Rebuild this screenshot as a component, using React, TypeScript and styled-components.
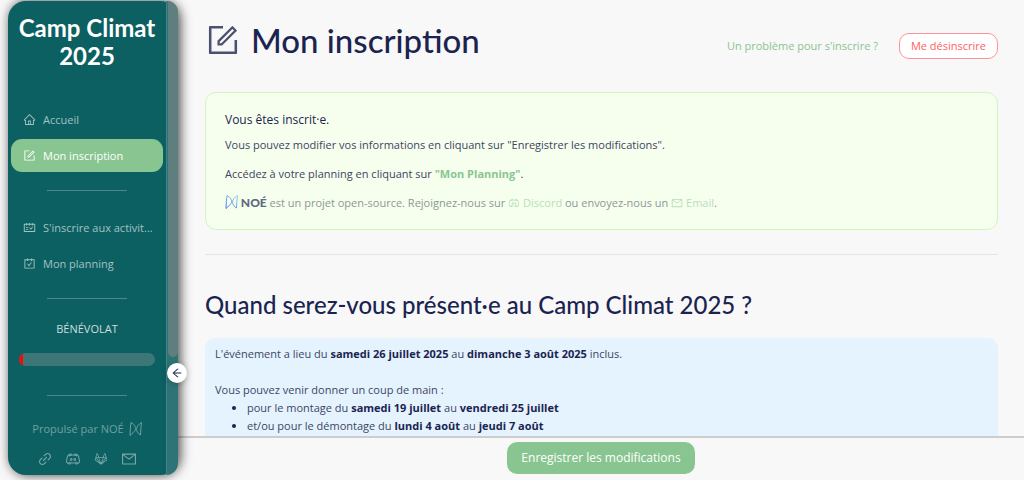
import React from "react";
import styled, { createGlobalStyle } from "styled-components";
import {
  AiOutlineArrowLeft,
  AiOutlineCarryOut,
  AiOutlineDiscord,
  AiOutlineForm,
  AiOutlineGitlab,
  AiOutlineHome,
  AiOutlineLink,
  AiOutlineMail,
  AiOutlineSchedule,
} from "react-icons/ai";

const colors = {
  teal: "#0c6062",
  green: "#89c590",
  navy: "#1b2450",
  page: "#f8f8f8",
  text: "#3c4564",
};

const headingFont = '"Lato", "Open Sans", sans-serif';

const GlobalStyle = createGlobalStyle`
  *, *::before, *::after { box-sizing: border-box; }
  body {
    margin: 0;
    background: ${colors.page};
    color: ${colors.text};
    font: 11px/18px "Open Sans", "Noto Sans", sans-serif;
  }
  h1, h2, p, ul { margin: 0; }
  a { text-decoration: none; color: inherit; }
  button { font: inherit; cursor: pointer; }
`;

const Shell = styled.div`
  display: flex;
  height: 100vh;
`;

const Sidebar = styled.aside`
  position: relative;
  z-index: 1;
  display: flex;
  flex: none;
  width: 170px;
  margin: 1px 0 5px 8px;
  border-radius: 18px;
  background: ${colors.teal};
  box-shadow: 2px 0 12px rgba(0, 0, 0, 0.75);
`;

const SidebarBody = styled.div`
  flex: 1;
  min-width: 0;
  display: flex;
  flex-direction: column;
  align-items: center;
`;

const SidebarTitle = styled.div`
  padding: 13px 0 33px;
  color: #fff;
  font: 700 24px/28px ${headingFont};
  text-align: center;
`;

const Menu = styled.nav`
  align-self: stretch;
  display: flex;
  flex-direction: column;
  gap: 3px;
  padding: 0 3px;
`;

const MenuItem = styled.a<{ $active?: boolean }>`
  display: flex;
  align-items: center;
  gap: 7px;
  height: 33px;
  padding: 0 6px 0 12px;
  border-radius: 11px;
  background: ${(p) => (p.$active ? colors.green : "transparent")};
  color: ${(p) => (p.$active ? "#fff" : "#a3c2c2")};
  white-space: nowrap;

  svg { flex: none; width: 13px; height: 13px; }
`;

const MenuRule = styled.hr`
  flex: none;
  width: 80px;
  height: 1px;
  margin: 18px 0 20px;
  border: 0;
  background: #4b898a;
`;

const GaugeLabel = styled.div`
  color: #ccdddd;
  line-height: 20px;
`;

const Gauge = styled.div`
  align-self: stretch;
  height: 13px;
  margin: 14px 11px 11px;
  border-radius: 7px;
  overflow: hidden;
  background: #3d7677;
`;

const GaugeFill = styled.div`
  height: 100%;
  background: #f50a0a;
`;

const Powered = styled.a`
  display: flex;
  align-items: center;
  gap: 5px;
  margin-top: 4px;
  color: #6da0a1;
`;

const SocialLinks = styled.div`
  display: flex;
  gap: 12px;
  margin-top: 13px;
  color: #78a7a8;

  a { display: flex; }
  svg { width: 16px; height: 16px; }
`;

const ScrollTrack = styled.div`
  flex: 0 0 12px;
  border-left: 1px solid #418485;
  border-radius: 0 18px 18px 0;
  overflow: hidden;
  background: #2e7477;
`;

const ScrollThumb = styled.div`
  height: 75%;
  margin-left: 1px;
  border-radius: 0 0 5px 5px;
  background: #5f7f7e;
`;

const CollapseButton = styled.button`
  position: absolute;
  right: -9px;
  bottom: 92px;
  display: flex;
  align-items: center;
  justify-content: center;
  width: 20px;
  height: 20px;
  padding: 0;
  border: 0;
  border-radius: 50%;
  background: #fff;
  color: ${colors.navy};
  box-shadow: 0 1px 6px rgba(0, 0, 0, 0.25);
`;

const Main = styled.main`
  flex: 1;
  min-width: 0;
  display: flex;
  flex-direction: column;
`;

const Content = styled.div`
  flex: 1;
  min-height: 0;
  overflow: hidden;
  padding: 22px 26px 0 27px;
`;

const PageHeader = styled.header`
  display: flex;
  justify-content: space-between;
  height: 48px;
  margin-bottom: 22px;
`;

const PageTitle = styled.h1`
  display: flex;
  align-items: center;
  align-self: flex-start;
  gap: 10px;
  color: ${colors.navy};
  font: 500 33px/36px ${headingFont};

  svg { width: 36px; height: 36px; color: #4a5272; }
`;

const HeaderActions = styled.div`
  display: flex;
  align-items: center;
  gap: 21px;
`;

const HelpLink = styled.a`
  color: ${colors.green};
`;

const DangerButton = styled.button`
  height: 26px;
  padding: 0 11px;
  border: 1px solid #ff9496;
  border-radius: 10px;
  background: #fff;
  color: #ff5f62;
`;

const SuccessCard = styled.section`
  display: flex;
  flex-direction: column;
  padding: 17px 19px 17px;
  border: 1px solid #d5f3bf;
  border-radius: 11px;
  background: #f6ffed;
`;

const CardTitle = styled.p`
  margin-bottom: 7px;
  font-size: 12px;
  line-height: 19px;
  color: ${colors.navy};
`;

const CardText = styled.p<{ $muted?: boolean }>`
  margin-bottom: ${(p) => (p.$muted ? 0 : 11)}px;
  color: ${(p) => (p.$muted ? "#8d9799" : colors.text)};

  svg { vertical-align: -2px; }
`;

const GreenLink = styled.a<{ $soft?: boolean }>`
  color: ${(p) => (p.$soft ? "#b8debb" : colors.green)};
  font-weight: ${(p) => (p.$soft ? 400 : 700)};
`;

const Brand = styled.strong`
  color: #606980;
  font: 900 12px/18px ${headingFont};
`;

const Divider = styled.hr`
  height: 1px;
  margin: 24px 0 32px;
  border: 0;
  background: #e5e5e6;
`;

const SectionTitle = styled.h2`
  margin-bottom: 15px;
  color: ${colors.navy};
  font: 500 24px/36px ${headingFont};
`;

const InfoBox = styled.section`
  padding: 7px 10px 24px;
  border-radius: 10px;
  background: #e5f3ff;

  strong { color: ${colors.navy}; }
  p + p { margin-top: 18px; }
  ul { padding-left: 32px; }
  li::marker { color: ${colors.navy}; }
`;

const Footer = styled.footer`
  display: flex;
  justify-content: center;
  padding: 4px 0 6px;
  border-top: 2px solid #cdcdce;
`;

const SaveButton = styled.button`
  height: 32px;
  padding: 0 14px;
  border: 0;
  border-radius: 10px;
  background: ${colors.green};
  color: #fff;
  font-size: 12px;
`;

function NoeLogo({ tinted = false }: { tinted?: boolean }) {
  return (
    <svg width="13" height="14" viewBox="0 0 26 28" fill="none" aria-hidden="true">
      <defs>
        <linearGradient id="noe-tint" x1="0" y1="28" x2="26" y2="0" gradientUnits="userSpaceOnUse">
          <stop offset="0" stopColor="#4a5cf5" />
          <stop offset="0.5" stopColor="#6fa4ee" />
          <stop offset="1" stopColor="#8ce0c8" />
        </linearGradient>
      </defs>
      <path
        d="M2 27C2 18 3 9 4 1C10 4 14 9 13 15C11 20 6 23 2 27ZM25 1C20 4 15 9 15 15C16 20 19 24 23 26C23 18 24 9 25 1Z"
        stroke={tinted ? "url(#noe-tint)" : "currentColor"}
        strokeWidth="2"
        strokeLinejoin="round"
      />
    </svg>
  );
}

export default function App() {
  return (
    <>
      <GlobalStyle />
      <Shell>
        <Sidebar>
          <SidebarBody>
            <SidebarTitle>
              Camp Climat
              <br />
              2025
            </SidebarTitle>
            <Menu aria-label="Principal">
              <MenuItem href="#accueil">
                <AiOutlineHome />
                <span>Accueil</span>
              </MenuItem>
              <MenuItem href="#inscription" $active aria-current="page">
                <AiOutlineForm />
                <span>Mon inscription</span>
              </MenuItem>
            </Menu>
            <MenuRule />
            <Menu aria-label="Activités">
              <MenuItem href="#activites">
                <AiOutlineSchedule />
                <span>S'inscrire aux activit...</span>
              </MenuItem>
              <MenuItem href="#planning">
                <AiOutlineCarryOut />
                <span>Mon planning</span>
              </MenuItem>
            </Menu>
            <MenuRule />
            <GaugeLabel>BÉNÉVOLAT</GaugeLabel>
            <Gauge role="progressbar" aria-label="Bénévolat" aria-valuenow={3}>
              <GaugeFill style={{ width: "3%" }} />
            </Gauge>
            <MenuRule />
            <Powered href="#noe">
              Propulsé par NOÉ <NoeLogo />
            </Powered>
            <SocialLinks>
              <a href="#site" aria-label="Site"><AiOutlineLink /></a>
              <a href="#discord" aria-label="Discord"><AiOutlineDiscord /></a>
              <a href="#gitlab" aria-label="GitLab"><AiOutlineGitlab /></a>
              <a href="#email" aria-label="Email"><AiOutlineMail /></a>
            </SocialLinks>
          </SidebarBody>
          <ScrollTrack>
            <ScrollThumb />
          </ScrollTrack>
          <CollapseButton aria-label="Replier le menu">
            <AiOutlineArrowLeft size={12} />
          </CollapseButton>
        </Sidebar>

        <Main>
          <Content>
            <PageHeader>
              <PageTitle>
                <AiOutlineForm />
                Mon inscription
              </PageTitle>
              <HeaderActions>
                <HelpLink href="#aide">Un problème pour s'inscrire ?</HelpLink>
                <DangerButton>Me désinscrire</DangerButton>
              </HeaderActions>
            </PageHeader>

            <SuccessCard>
              <CardTitle>Vous êtes inscrit·e.</CardTitle>
              <CardText>
                Vous pouvez modifier vos informations en cliquant sur "Enregistrer les modifications".
              </CardText>
              <CardText>
                Accédez à votre planning en cliquant sur{" "}
                <GreenLink href="#planning">"Mon Planning"</GreenLink>.
              </CardText>
              <CardText $muted>
                <NoeLogo tinted /> <Brand>NOÉ</Brand> est un projet open-source. Rejoignez-nous sur{" "}
                <GreenLink $soft href="#discord"><AiOutlineDiscord size={12} /> Discord</GreenLink> ou
                envoyez-nous un{" "}
                <GreenLink $soft href="#email"><AiOutlineMail size={12} /> Email</GreenLink>.
              </CardText>
            </SuccessCard>

            <Divider />

            <SectionTitle>Quand serez-vous présent·e au Camp Climat 2025 ?</SectionTitle>
            <InfoBox>
              <p>
                L'événement a lieu du <strong>samedi 26 juillet 2025</strong> au{" "}
                <strong>dimanche 3 août 2025</strong> inclus.
              </p>
              <p>Vous pouvez venir donner un coup de main :</p>
              <ul>
                <li>
                  pour le montage du <strong>samedi 19 juillet</strong> au{" "}
                  <strong>vendredi 25 juillet</strong>
                </li>
                <li>
                  et/ou pour le démontage du <strong>lundi 4 août</strong> au{" "}
                  <strong>jeudi 7 août</strong>
                </li>
              </ul>
            </InfoBox>
          </Content>
          <Footer>
            <SaveButton>Enregistrer les modifications</SaveButton>
          </Footer>
        </Main>
      </Shell>
    </>
  );
}
